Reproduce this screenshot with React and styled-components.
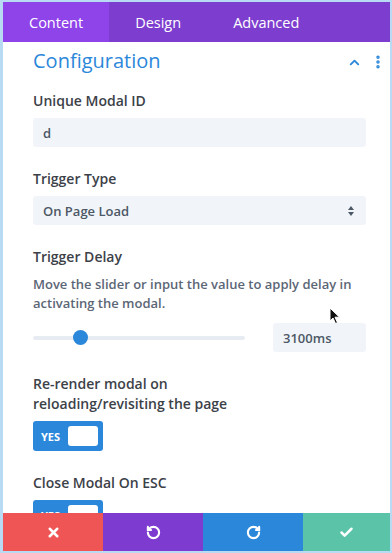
import React from "react";
import styled, { createGlobalStyle } from "styled-components";
import { X, RotateCcw, RotateCw, Check, ChevronUp, EllipsisVertical } from "lucide-react";

const GlobalStyle = createGlobalStyle`
  body {
    margin: 0;
    font-family: "Open Sans", "Noto Sans", sans-serif;
  }
`;

const tabs = ["Content", "Design", "Advanced"];

const App = () => {
  return (
    <>
      <GlobalStyle />
      <Frame>
        <Panel>
          <TabBar>
            {tabs.map((t, i) => (
              <Tab key={t} $active={i === 0}>
                {t}
              </Tab>
            ))}
          </TabBar>
          <Body>
            <TitleRow>
              <Title>Configuration</Title>
              <TitleIcons>
                <ChevronUp size={15} strokeWidth={3} />
                <EllipsisVertical size={16} strokeWidth={3.2} />
              </TitleIcons>
            </TitleRow>

            <Field>
              <Label>Unique Modal ID</Label>
              <TextBox>d</TextBox>
            </Field>

            <Field>
              <Label>Trigger Type</Label>
              <TextBox>
                On Page Load
                <SelectArrows viewBox="0 0 8 12" width="8" height="12">
                  <path d="M4 1 L7 5 H1 Z" fill="#4c5866" />
                  <path d="M4 11 L7 7 H1 Z" fill="#4c5866" />
                </SelectArrows>
              </TextBox>
            </Field>

            <Field>
              <Label>Trigger Delay</Label>
              <Description>
                Move the slider or input the value to apply delay in
                activating the modal.
              </Description>
              <SliderRow>
                <Track>
                  <Thumb />
                </Track>
                <ValueBox>3100ms</ValueBox>
              </SliderRow>
            </Field>

            <Field>
              <Label>
                Re-render modal on
                <br />
                reloading/revisiting the page
              </Label>
              <Toggle>
                YES
                <Knob />
              </Toggle>
            </Field>

            <Field>
              <Label>Close Modal On ESC</Label>
              <Toggle>
                YES
                <Knob />
              </Toggle>
            </Field>

            <Cursor viewBox="0 0 12 18" width="12" height="18">
              <path
                d="M1 1 L1 14 L4 11 L6.5 16.5 L8.5 15.6 L6 10.2 L10.5 10.2 Z"
                fill="#111"
                stroke="#fff"
                strokeWidth="1"
                strokeLinejoin="round"
              />
            </Cursor>
          </Body>
          <ActionBar>
            <Action $bg="#ef5555">
              <X size={15} strokeWidth={4} />
            </Action>
            <Action $bg="#7d3bcf">
              <RotateCcw size={15} strokeWidth={3.4} />
            </Action>
            <Action $bg="#2b87da">
              <RotateCw size={15} strokeWidth={3.4} />
            </Action>
            <Action $bg="#5ac3a8" $grow>
              <Check size={15} strokeWidth={4} />
            </Action>
          </ActionBar>
        </Panel>
      </Frame>
    </>
  );
};

const Frame = styled.div`
  width: 392px;
  height: 553px;
  box-sizing: border-box;
  padding: 2px 2px 2px 3px;
  background: #b9daf3;
`;

const Panel = styled.div`
  height: 100%;
  display: flex;
  flex-direction: column;
  background: #fff;
  overflow: hidden;
`;

const TabBar = styled.div`
  display: flex;
  height: 40px;
  flex-shrink: 0;
  background: #7d3ecf;
`;

const Tab = styled.div`
  display: flex;
  align-items: center;
  padding: 0 26px;
  font-size: 14.5px;
  color: #fff;
  background: ${(p) => (p.$active ? "#8f44ea" : "transparent")};
`;

const Body = styled.div`
  position: relative;
  flex: 1;
  overflow: hidden;
  padding: 0 24px 0 30px;
  display: flex;
  flex-direction: column;
  gap: 22px;
`;

const TitleRow = styled.div`
  display: flex;
  align-items: center;
  justify-content: space-between;
  margin: 4px -20px -7px 0;
`;

const Title = styled.div`
  font-size: 20px;
  line-height: 30px;
  color: #2b87da;
`;

const TitleIcons = styled.div`
  display: flex;
  align-items: center;
  gap: 8px;
  color: #2b87da;
  padding-top: 2px;
`;

const Field = styled.div`
  display: flex;
  flex-direction: column;
  gap: 7px;
`;

const Label = styled.div`
  font-size: 14px;
  line-height: 20px;
  font-weight: 600;
  color: #3c4148;
`;

const TextBox = styled.div`
  height: 29px;
  display: flex;
  align-items: center;
  justify-content: space-between;
  padding: 0 10px;
  border-radius: 3px;
  background: #f1f5f9;
  font-size: 13px;
  font-weight: 600;
  color: #4c5866;
`;

const SelectArrows = styled.svg`
  margin-right: 1px;
`;

const Description = styled.div`
  font-size: 13px;
  line-height: 19px;
  font-weight: 600;
  color: #5b6676;
  margin: 1px 0 3px;
`;

const SliderRow = styled.div`
  display: flex;
  align-items: center;
  gap: 28px;
`;

const Track = styled.div`
  position: relative;
  flex: 1;
  height: 4px;
  border-radius: 2px;
  background: #e6ecf2;
`;

const Thumb = styled.div`
  position: absolute;
  left: 40px;
  top: -6px;
  width: 15px;
  height: 15px;
  border-radius: 50%;
  background: #2b87da;
`;

const ValueBox = styled.div`
  width: 93px;
  height: 29px;
  box-sizing: border-box;
  display: flex;
  align-items: center;
  padding-left: 10px;
  border-radius: 3px;
  background: #f1f5f9;
  font-size: 13px;
  font-weight: 600;
  color: #4c5866;
`;

const Toggle = styled.div`
  width: 70px;
  height: 30px;
  box-sizing: border-box;
  display: flex;
  align-items: center;
  justify-content: space-between;
  padding: 0 5px 0 8px;
  border-radius: 3px;
  background: #2b87da;
  color: #fff;
  font-size: 11px;
  font-weight: 700;
`;

const Knob = styled.div`
  width: 30px;
  height: 20px;
  border-radius: 3px;
  background: #fff;
`;

const Cursor = styled.svg`
  position: absolute;
  left: 326px;
  top: 265px;
`;

const ActionBar = styled.div`
  display: flex;
  height: 38px;
  flex-shrink: 0;
`;

const Action = styled.div`
  width: 100px;
  flex: ${(p) => (p.$grow ? 1 : "none")};
  display: flex;
  align-items: center;
  justify-content: center;
  background: ${(p) => p.$bg};
  color: #fff;
`;

export default App;
